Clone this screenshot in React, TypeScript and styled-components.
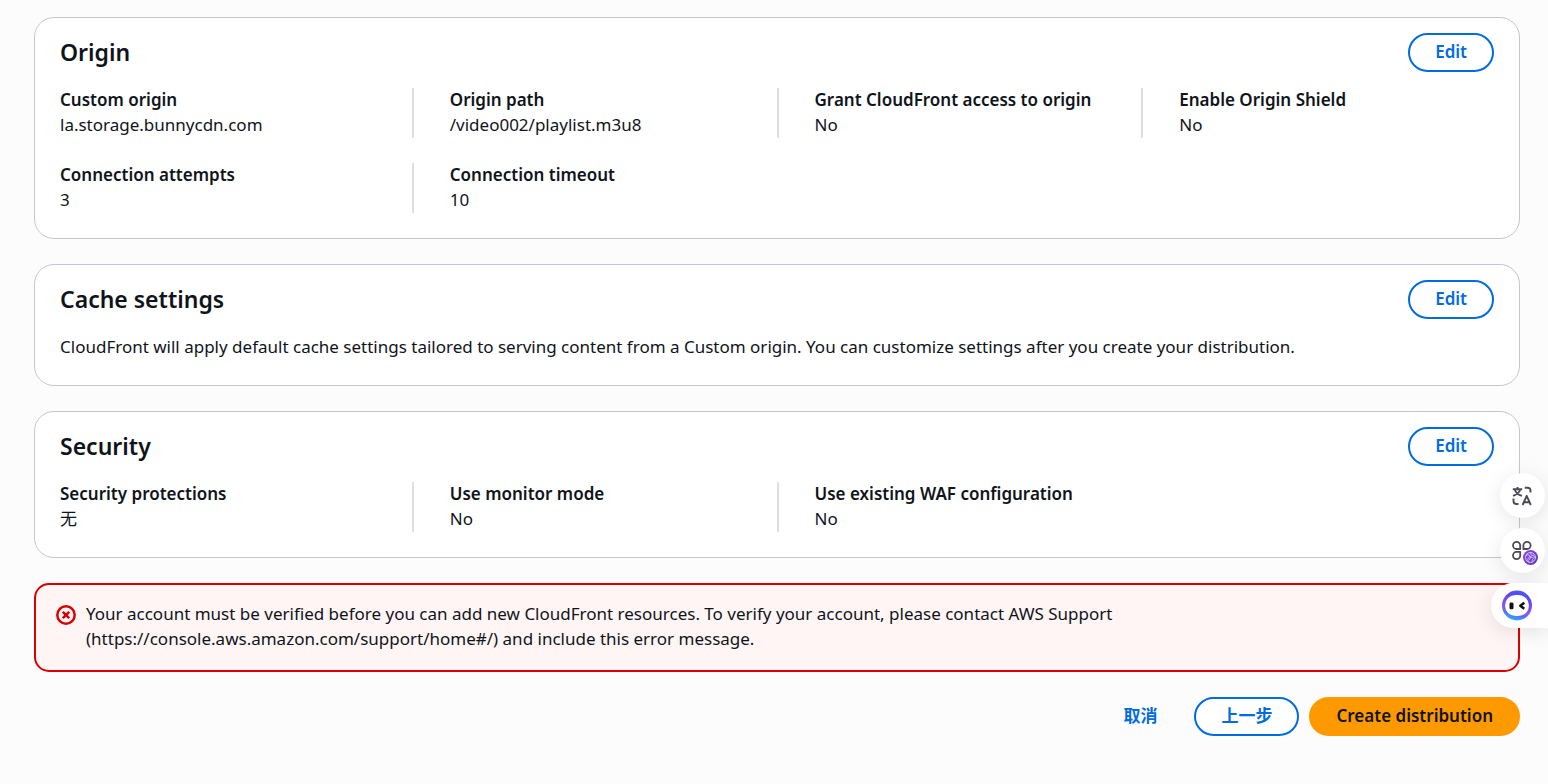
import React from "react";
import styled, { createGlobalStyle, css } from "styled-components";

const GlobalStyle = createGlobalStyle`
  *, *::before, *::after { box-sizing: border-box; }
  body {
    margin: 0;
    background: #fcfcfd;
    color: #0f141a;
    font-family: "Noto Sans", "Noto Sans CJK SC", sans-serif;
    font-size: 17px;
    line-height: 25px;
  }
`;

const Page = styled.main`
  display: flex;
  flex-direction: column;
  gap: 25px;
  padding: 17px 28px 48px 34px;
`;

const Card = styled.section`
  padding: 15px 25px 25px;
  border: 1px solid #c6c6cd;
  border-radius: 20px;
  background: #fff;
`;

const CardHeader = styled.header`
  display: flex;
  align-items: center;
  justify-content: space-between;
  margin-bottom: 16px;
`;

const CardTitle = styled.h2`
  margin: 0;
  padding-bottom: 2px;
  font-size: 23px;
  line-height: 30px;
  font-weight: 600;
`;

const Text = styled.p`
  margin: 0;
  padding-bottom: 1px;
  line-height: 24px;
`;

const Button = styled.button<{ $kind?: "normal" | "primary" | "link" }>`
  height: 39px;
  padding: 0 25px 2px;
  border: 2px solid #006ce0;
  border-radius: 20px;
  background: #fff;
  color: #006ce0;
  font: inherit;
  font-weight: 600;
  line-height: 25px;
  cursor: pointer;
  ${({ $kind }) =>
    $kind === "primary" &&
    css`
      border-color: #ff9900;
      background: #ff9900;
      color: #0f141a;
    `}
  ${({ $kind }) =>
    $kind === "link" &&
    css`
      border-color: transparent;
      background: transparent;
    `}
`;

const Pairs = styled.dl`
  display: grid;
  grid-template-columns: repeat(4, minmax(0, 1fr));
  row-gap: 25px;
  margin: 0 -12px 0 -13px;
`;

const Pair = styled.div`
  padding: 0 12px 1px 36px;
  border-left: 2px solid #dedee3;
  &:nth-child(4n + 1) {
    padding-left: 13px;
    border-left: 0;
  }
`;

const Label = styled.dt`
  font-weight: 600;
  line-height: 24px;
`;

const Value = styled.dd`
  margin: 0;
`;

const Alert = styled.div`
  display: flex;
  gap: 10px;
  padding: 16px 20px 19px;
  border: 2px solid #db0000;
  border-radius: 15px;
  background: #fff5f5;
`;

const AlertIcon = styled.svg`
  flex: none;
  margin-top: 4px;
`;

const AlertText = styled.p`
  margin: 0;
  max-width: 1080px;
`;

const Actions = styled.footer`
  display: flex;
  justify-content: flex-end;
  gap: 10px;
`;

const Dock = styled.aside`
  position: fixed;
  top: 473px;
  right: 0;
  display: flex;
  flex-direction: column;
  align-items: flex-end;
  gap: 10px;
`;

const DockButton = styled.button<{ $tab?: boolean }>`
  display: flex;
  align-items: center;
  justify-content: ${({ $tab }) => ($tab ? "flex-start" : "center")};
  width: ${({ $tab }) => ($tab ? 57 : 45)}px;
  height: 45px;
  margin-right: ${({ $tab }) => ($tab ? 0 : 3)}px;
  padding: ${({ $tab }) => ($tab ? "0 0 0 11px" : "0")};
  border: 0;
  border-radius: ${({ $tab }) => ($tab ? "23px 0 0 23px" : "50%")};
  background: #fff;
  box-shadow: 0 4px 20px rgba(0, 0, 0, 0.1);
  cursor: pointer;
`;

type Item = [string, string];

const origin: Item[] = [
  ["Custom origin", "la.storage.bunnycdn.com"],
  ["Origin path", "/video002/playlist.m3u8"],
  ["Grant CloudFront access to origin", "No"],
  ["Enable Origin Shield", "No"],
  ["Connection attempts", "3"],
  ["Connection timeout", "10"],
];

const security: Item[] = [
  ["Security protections", "无"],
  ["Use monitor mode", "No"],
  ["Use existing WAF configuration", "No"],
];

function Section({ title, children }: { title: string; children: React.ReactNode }) {
  return (
    <Card>
      <CardHeader>
        <CardTitle>{title}</CardTitle>
        <Button type="button">Edit</Button>
      </CardHeader>
      {children}
    </Card>
  );
}

function KeyValues({ items }: { items: Item[] }) {
  return (
    <Pairs>
      {items.map(([label, value]) => (
        <Pair key={label}>
          <Label>{label}</Label>
          <Value>{value}</Value>
        </Pair>
      ))}
    </Pairs>
  );
}

function TranslateIcon() {
  return (
    <svg width="22" height="22" viewBox="1 0 22 22" fill="none" stroke="#4b4b55" strokeWidth="1.9" strokeLinejoin="round">
      <path d="M1.800 4.300h9.400M6.500 2v2.300M9.300 4.500C8.200 7.600 5.800 9.700 2 10.800M3.700 4.500C4.700 7.600 7.200 9.800 11 10.800" />
      <path d="M13.800 2.700h2.700a3 3 0 0 1 3 3V7.500" />
      <path d="M2.500 13.500v2.500a3 3 0 0 0 3 3h2" />
      <path d="M11.600 20L15.700 10.800L19.800 20M13 17.200h5.400" />
    </svg>
  );
}

function AppsIcon() {
  return (
    <svg width="31" height="31" viewBox="-4 -5 31 31" fill="none">
      <defs>
        <linearGradient id="badge" x1="0" y1="0" x2="1" y2="1">
          <stop offset="0" stopColor="#8a4fe8" />
          <stop offset="1" stopColor="#5f35b5" />
        </linearGradient>
      </defs>
      <g stroke="#4b4b55" strokeWidth="1.800" strokeLinejoin="round">
        <path d="M9.200 9H5.500a3.600 3.600 0 1 1 3.700-3.700V9z" />
        <path d="M12.400 9H16.100a3.600 3.600 0 1 0-3.700-3.700z" />
        <path d="M9.200 11.900H5.500a3.600 3.600 0 1 0 3.700 3.700z" />
      </g>
      <circle cx="19.500" cy="17.500" r="7.500" fill="url(#badge)" />
      <g stroke="#e3d2ff" strokeWidth="0.900" strokeLinecap="round" strokeLinejoin="round">
        <circle cx="19.500" cy="17.500" r="5" />
        <path d="M15.500 15.200c2-.8 3-.2 3.300 1.100s-2 1.500-2 3 .8 1.500 1 2.500M20 12.700c-1 2 .5 2.600 2 2.800s1.700 2 .5 3-1.500 1.500-1.300 3M18.800 16.300l2.600 1.200M18.500 19.500l1.500-2.500" />
      </g>
    </svg>
  );
}

function AssistantIcon() {
  return (
    <svg width="31" height="31" viewBox="0 0 31 31" fill="none">
      <defs>
        <linearGradient id="ring" x1="0.700" y1="0" x2="0.400" y2="1">
          <stop offset="0" stopColor="#3f5cf5" />
          <stop offset="0.250" stopColor="#5a48f2" />
          <stop offset="0.600" stopColor="#9050f2" />
          <stop offset="0.800" stopColor="#5a6cf5" />
          <stop offset="1" stopColor="#2fb0f8" />
        </linearGradient>
      </defs>
      <circle cx="15" cy="15.500" r="15" fill="url(#ring)" />
      <rect x="3" y="5" width="24" height="21" rx="10.500" fill="#fff" />
      <rect x="7.500" y="12.500" width="4" height="6.800" rx="1.400" fill="#111" />
      <path d="M22.300 12.800l-4 3 4 3" stroke="#111" strokeWidth="2.500" strokeLinejoin="round" />
    </svg>
  );
}

export default function App() {
  return (
    <>
      <GlobalStyle />
      <Page>
        <Section title="Origin">
          <KeyValues items={origin} />
        </Section>
        <Section title="Cache settings">
          <Text>
            CloudFront will apply default cache settings tailored to serving content from a Custom origin. You can
            customize settings after you create your distribution.
          </Text>
        </Section>
        <Section title="Security">
          <KeyValues items={security} />
        </Section>
        <Alert role="alert">
          <AlertIcon width="20" height="20" viewBox="0 0 20 20" fill="none" stroke="#db0000" strokeWidth="2.500">
            <circle cx="10" cy="10" r="8.700" />
            <path d="M6.800 6.800l6.400 6.400M13.200 6.800l-6.400 6.400" />
          </AlertIcon>
          <AlertText>
            Your account must be verified before you can add new CloudFront resources. To verify your account, please
            contact AWS Support (https://console.aws.amazon.com/support/home#/) and include this error message.
          </AlertText>
        </Alert>
        <Actions>
          <Button type="button" $kind="link">取消</Button>
          <Button type="button">上一步</Button>
          <Button type="button" $kind="primary">Create distribution</Button>
        </Actions>
      </Page>
      <Dock>
        <DockButton type="button" aria-label="Translate"><TranslateIcon /></DockButton>
        <DockButton type="button" aria-label="Apps"><AppsIcon /></DockButton>
        <DockButton type="button" aria-label="Assistant" $tab><AssistantIcon /></DockButton>
      </Dock>
    </>
  );
}
